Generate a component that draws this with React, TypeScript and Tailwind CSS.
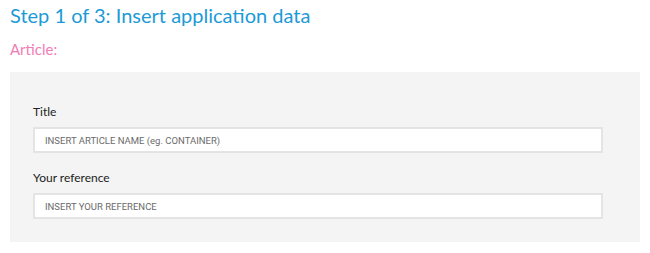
import React from "react";

export default function App() {
  return (
    <div className="w-[650px] h-[253px] bg-white px-[10px] pt-[1px]" style={{ fontFamily: "Lato, 'Noto Sans', sans-serif" }}>
      <h1 className="text-[20px] leading-[28px] text-[#1d9ad6] font-normal">Step 1 of 3: Insert application data</h1>
      <h2 className="mt-[10px] text-[15px] leading-[20px] text-[#f27cb6] font-normal">Article:</h2>
      <div className="mt-[13px] bg-[#f4f4f4] h-[170px] pl-[23px] pt-[32px]">
        <label className="block text-[12px] leading-[16px] text-[#222]">Title</label>
        <input
          className="mt-[7px] block w-[570px] h-[26px] bg-white border-2 border-[#e4e4e4] pl-[10px] text-[9.5px] text-[#555] placeholder:text-[#6b6b6b] outline-none"
          style={{ fontFamily: "Roboto, 'Liberation Sans', sans-serif" }}
          placeholder="INSERT ARTICLE NAME (eg. CONTAINER)"
        />
        <label className="block mt-[17px] text-[12px] leading-[16px] text-[#222]">Your reference</label>
        <input
          className="mt-[7px] block w-[570px] h-[26px] bg-white border-2 border-[#e4e4e4] pl-[10px] text-[9.5px] text-[#555] placeholder:text-[#6b6b6b] outline-none"
          style={{ fontFamily: "Roboto, 'Liberation Sans', sans-serif" }}
          placeholder="INSERT YOUR REFERENCE"
        />
      </div>
    </div>
  );
}
